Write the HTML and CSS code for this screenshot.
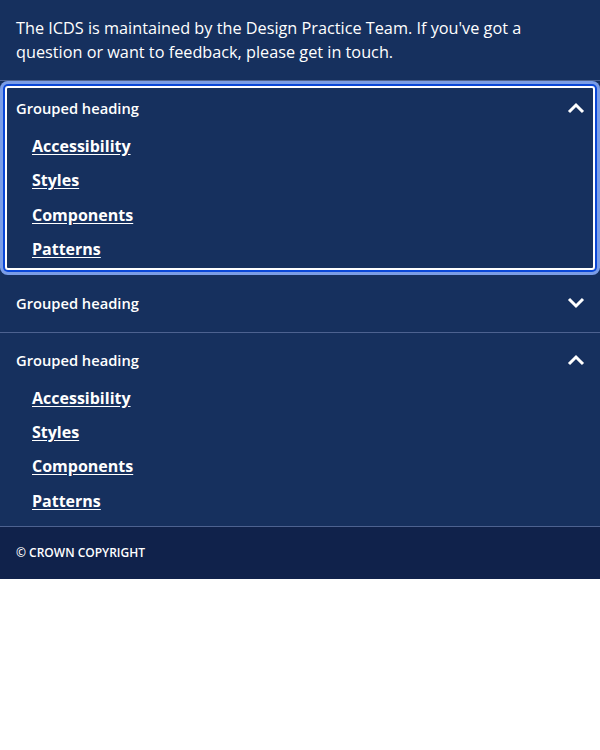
FILE: index.html
```html
<!DOCTYPE html>
<html lang="en">
<head>
<meta charset="utf-8">
<title>Footer navigation</title>
<link rel="stylesheet" href="styles.css">
</head>
<body>
<div class="page">
  <p class="intro">The ICDS is maintained by the Design Practice Team. If you've got a question or want to feedback, please get in touch.</p>

  <section class="group group--focus">
    <div class="group-head">
      <span class="group-title">Grouped heading</span>
      <svg class="chev" width="18" height="12" viewBox="0 0 18 12"><path d="M2 10 L9 3 L16 10" fill="none" stroke="#fff" stroke-width="3" stroke-linejoin="miter"/></svg>
    </div>
    <ul class="links">
      <li><a href="#">Accessibility</a></li>
      <li><a href="#">Styles</a></li>
      <li><a href="#">Components</a></li>
      <li><a href="#">Patterns</a></li>
    </ul>
  </section>

  <section class="group">
    <div class="group-head">
      <span class="group-title">Grouped heading</span>
      <svg class="chev" width="18" height="12" viewBox="0 0 18 12"><path d="M2 2 L9 9 L16 2" fill="none" stroke="#fff" stroke-width="3" stroke-linejoin="miter"/></svg>
    </div>
  </section>

  <section class="group">
    <div class="group-head">
      <span class="group-title">Grouped heading</span>
      <svg class="chev" width="18" height="12" viewBox="0 0 18 12"><path d="M2 10 L9 3 L16 10" fill="none" stroke="#fff" stroke-width="3" stroke-linejoin="miter"/></svg>
    </div>
    <ul class="links">
      <li><a href="#">Accessibility</a></li>
      <li><a href="#">Styles</a></li>
      <li><a href="#">Components</a></li>
      <li><a href="#">Patterns</a></li>
    </ul>
  </section>

  <footer class="footer">© CROWN COPYRIGHT</footer>
</div>
</body>
</html>
```

FILE: styles.css
```css
html, body {
  margin: 0;
  padding: 0;
  background: #ffffff;
}

.page {
  background: #16305e;
  color: #ffffff;
  font-family: "Open Sans", "Noto Sans", sans-serif;
}

.intro {
  margin: 0;
  padding: 16px 16px;
  font-size: 16.25px;
  line-height: 24px;
  border-bottom: 1px solid #4d6290;
}

.group {
  position: relative;
  padding: 16px 16px 13px;
  border-bottom: 1px solid #4d6290;
}

.group--focus {
  padding-bottom: 14px;
  border-bottom-color: #16305e;
}

.group--focus::after {
  content: "";
  position: absolute;
  top: 5px;
  left: 5px;
  right: 5px;
  bottom: 5px;
  border: 2px solid #ffffff;
  border-radius: 3px;
  box-shadow: 0 0 0 2px #0a47d8, 0 0 0 5px #7b9de6;
  pointer-events: none;
}

.group-head {
  display: flex;
  align-items: center;
  justify-content: space-between;
  height: 22px;
  margin-bottom: 5px;
}

.group-title {
  font-size: 14.7px;
  font-weight: 600;
  line-height: 22px;
}

.chev {
  display: block;
  margin-right: -1px;
}

.links {
  list-style: none;
  margin: 15px 0 0;
  padding: 0 0 0 16px;
  display: flex;
  flex-direction: column;
  gap: 10.3px;
}

.links li {
  line-height: 24px;
}

.links a {
  color: #ffffff;
  font-size: 16px;
  font-weight: 700;
  text-decoration: underline;
  text-underline-offset: 2px;
}

.footer {
  background: #10224b;
  padding: 16px;
  font-size: 12px;
  font-weight: 600;
  line-height: 20px;
}
```
